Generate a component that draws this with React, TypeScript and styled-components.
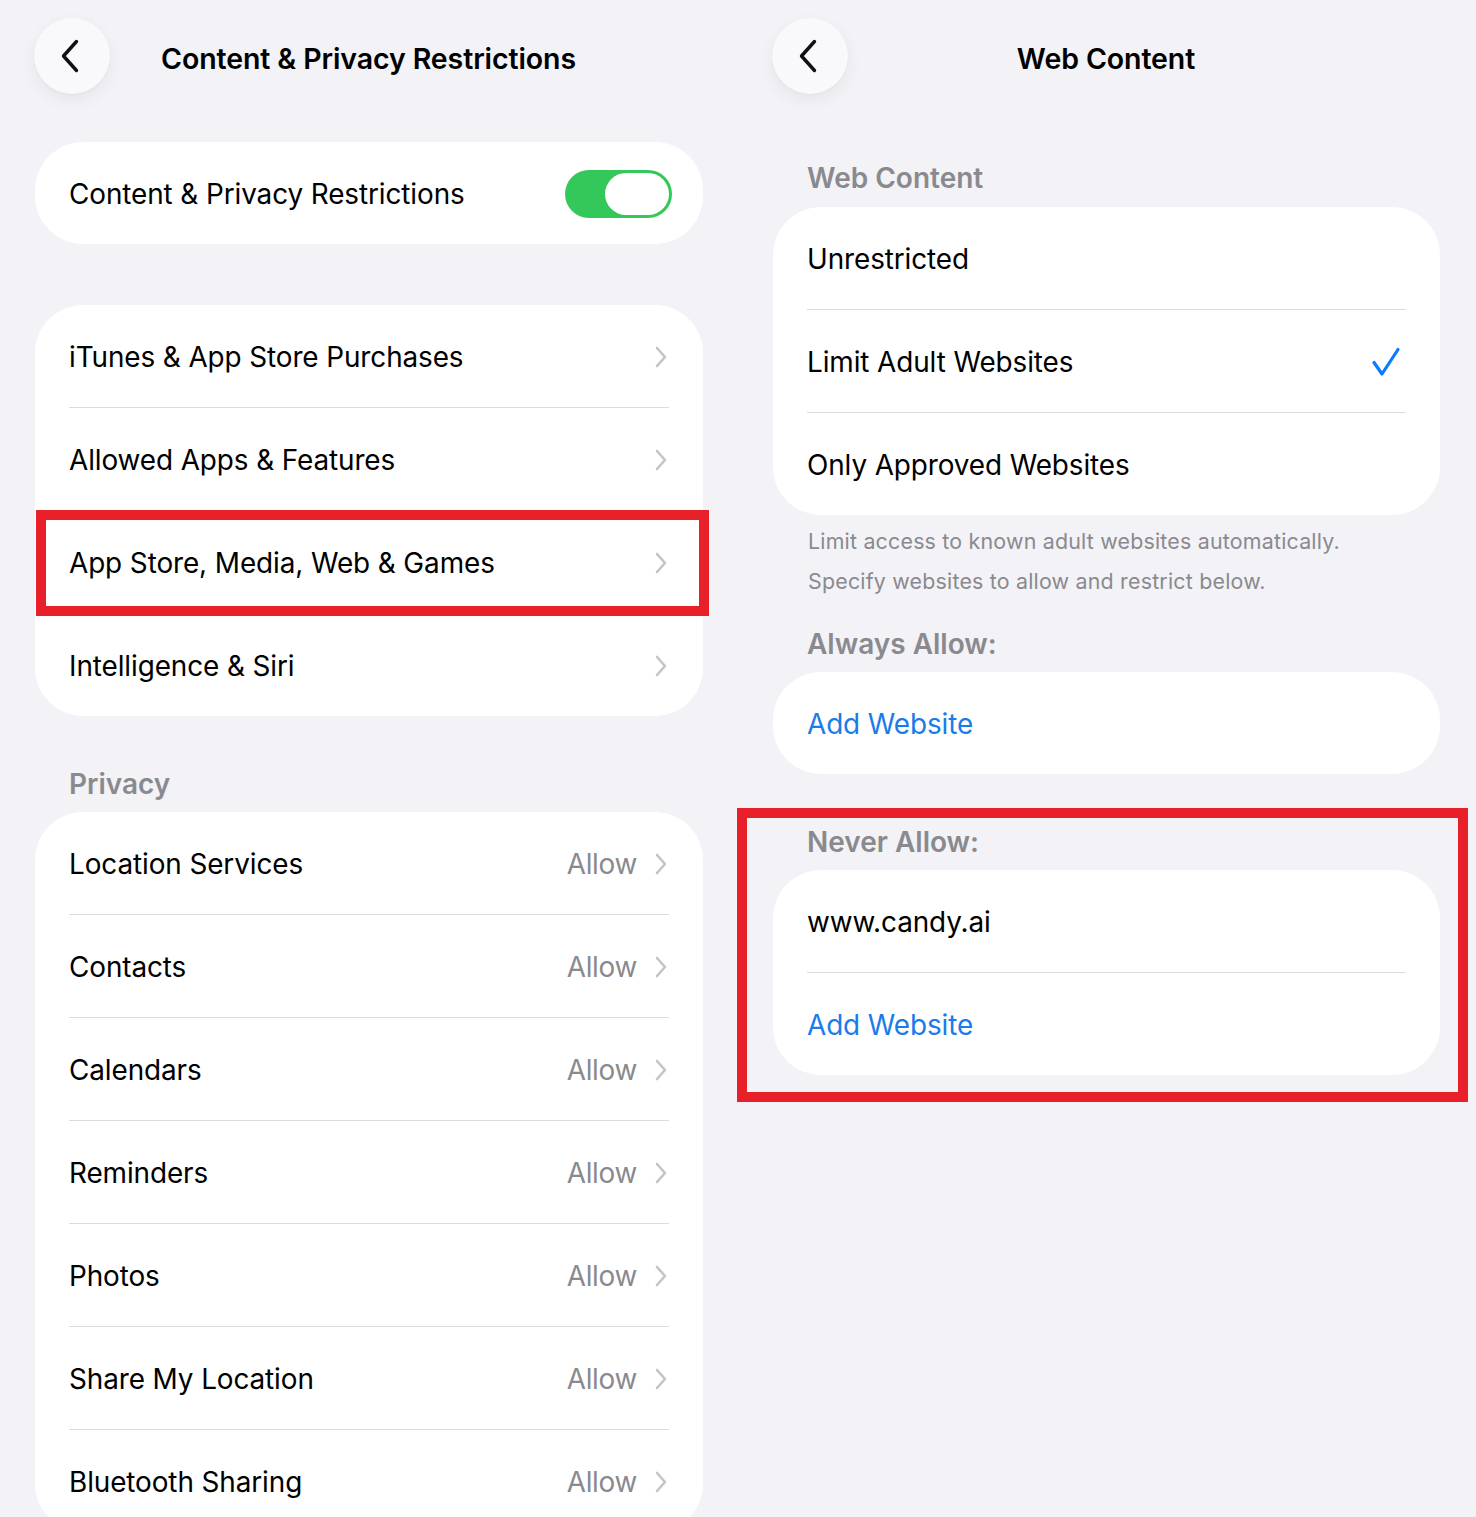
import React from "react";
import styled, { createGlobalStyle } from "styled-components";

const Global = createGlobalStyle`
  html, body {
    margin: 0;
    padding: 0;
    background: #f2f2f7;
  }
  body {
    font-family: Inter, "Liberation Sans", sans-serif;
    overflow: hidden;
    -webkit-font-smoothing: antialiased;
  }
`;

const Page = styled.div`
  display: grid;
  grid-template-columns: 668px 667px;
  column-gap: 70px;
  align-items: start;
  padding: 18px 36px 0 35px;
  height: 1517px;
  box-sizing: border-box;
  overflow: hidden;
  background: #f2f2f7;
`;

const Column = styled.div`
  display: flex;
  flex-direction: column;
  min-width: 0;
`;

const NavBar = styled.div`
  display: grid;
  grid-template-columns: 76px 1fr 76px;
  align-items: center;
  height: 76px;
  margin-left: -1px;
`;

const BackButton = styled.button`
  width: 76px;
  height: 76px;
  border-radius: 50%;
  border: none;
  padding: 0 4px 0 0;
  background: #f9f9fb;
  box-shadow: 0 6px 18px rgba(0, 0, 0, 0.06), 0 1px 3px rgba(0, 0, 0, 0.03);
  display: flex;
  align-items: center;
  justify-content: center;
`;

const NavTitle = styled.h1`
  margin: 0;
  text-align: center;
  font-size: 28.5px;
  font-weight: 600;
  color: #000;
  letter-spacing: -0.1px;
  padding-top: 4px;
  white-space: nowrap;
`;

const Card = styled.div<{ $mt?: number }>`
  background: #fff;
  border-radius: 48px;
  margin-top: ${(p) => p.$mt ?? 0}px;
  display: flex;
  flex-direction: column;
`;

const Row = styled.div`
  position: relative;
  display: flex;
  align-items: center;
  justify-content: space-between;
  height: 102px;
  box-sizing: border-box;
  padding: 2px 36px 0 34px;
  font-size: 27.9px;
  color: #000;
  letter-spacing: -0.1px;
`;

const Label = styled.span<{ $link?: boolean }>`
  color: ${(p) => (p.$link ? "#1a7bea" : "#000")};
`;

const Trailing = styled.div`
  display: flex;
  align-items: center;
  gap: 18px;
`;

const Value = styled.span`
  color: #8a8a8e;
  letter-spacing: -0.3px;
`;

const Separator = styled.div`
  height: 1px;
  background: #dcdce0;
  margin: 0 34px;
`;

const SectionHeader = styled.div<{ $mt: number; $mb?: number }>`
  margin-top: ${(p) => p.$mt}px;
  margin-bottom: ${(p) => p.$mb ?? 10}px;
  height: 36px;
  line-height: 36px;
  padding-left: 34px;
  font-size: 28px;
  font-weight: 600;
  color: #8a8a8e;
`;

const Footer = styled.p`
  margin: 6px 0 0;
  padding-left: 35px;
  font-size: 21.4px;
  line-height: 40px;
  color: #8a8a8e;
  letter-spacing: 0.2px;
`;

const Toggle = styled.div<{ $on: boolean }>`
  width: 107px;
  height: 48px;
  border-radius: 24px;
  background: ${(p) => (p.$on ? "#34c759" : "#e9e9ea")};
  display: flex;
  align-items: center;
  justify-content: ${(p) => (p.$on ? "flex-end" : "flex-start")};
  padding: 0 3px;
  box-sizing: border-box;
  margin-right: -5px;
`;

const Knob = styled.div`
  width: 64px;
  height: 42px;
  border-radius: 21px;
  background: #fff;
`;

const Highlight = styled.div`
  position: absolute;
  border: 10px solid #e8202a;
  pointer-events: none;
`;

const RowHighlight = styled(Highlight)`
  top: -1px;
  bottom: -3px;
  left: 1px;
  right: -6px;
`;

const Group = styled.section<{ $mt: number }>`
  position: relative;
  margin-top: ${(p) => p.$mt}px;
  display: flex;
  flex-direction: column;
`;

const GroupHighlight = styled(Highlight)`
  top: -16px;
  bottom: -27px;
  left: -36px;
  right: -28px;
`;

const CheckWrap = styled.span`
  display: flex;
  margin-right: 3px;
`;

const BackIcon = () => (
  <svg width="20" height="34" viewBox="0 0 20 34">
    <path
      d="M16.5 2.5 L3.5 17 L16.5 31.5"
      fill="none"
      stroke="#111"
      strokeWidth="3.4"
      strokeLinecap="round"
      strokeLinejoin="round"
    />
  </svg>
);

const Chevron = () => (
  <svg width="12" height="22" viewBox="0 0 12 22">
    <path
      d="M2 2 L10 11 L2 20"
      fill="none"
      stroke="#c4c4c8"
      strokeWidth="2.6"
      strokeLinecap="round"
      strokeLinejoin="round"
    />
  </svg>
);

const Check = () => (
  <CheckWrap>
    <svg width="30" height="30" viewBox="0 0 30 30">
      <path
        d="M3 15.5 L11 27 L27 2.5"
        fill="none"
        stroke="#0a7aff"
        strokeWidth="3.2"
        strokeLinecap="round"
        strokeLinejoin="round"
      />
    </svg>
  </CheckWrap>
);

const NavHeader = ({ title }: { title: string }) => (
  <NavBar>
    <BackButton aria-label="Back">
      <BackIcon />
    </BackButton>
    <NavTitle>{title}</NavTitle>
    <span />
  </NavBar>
);

const mainItems = [
  "iTunes & App Store Purchases",
  "Allowed Apps & Features",
  "App Store, Media, Web & Games",
  "Intelligence & Siri",
];

const privacyItems = [
  "Location Services",
  "Contacts",
  "Calendars",
  "Reminders",
  "Photos",
  "Share My Location",
  "Bluetooth Sharing",
];

export default function App() {
  return (
    <>
      <Global />
      <Page>
        <Column>
          <NavHeader title="Content & Privacy Restrictions" />
          <Card $mt={48}>
            <Row>
              <Label>Content &amp; Privacy Restrictions</Label>
              <Toggle $on>
                <Knob />
              </Toggle>
            </Row>
          </Card>

          <Card $mt={61}>
            {mainItems.map((item, i) => (
              <React.Fragment key={item}>
                {i > 0 && <Separator />}
                <Row>
                  <Label>{item}</Label>
                  <Chevron />
                  {i === 2 && <RowHighlight />}
                </Row>
              </React.Fragment>
            ))}
          </Card>

          <SectionHeader $mt={50}>Privacy</SectionHeader>
          <Card>
            {privacyItems.map((item, i) => (
              <React.Fragment key={item}>
                {i > 0 && <Separator />}
                <Row>
                  <Label>{item}</Label>
                  <Trailing>
                    <Value>Allow</Value>
                    <Chevron />
                  </Trailing>
                </Row>
              </React.Fragment>
            ))}
          </Card>
        </Column>

        <Column>
          <NavHeader title="Web Content" />
          <SectionHeader $mt={66} $mb={11}>
            Web Content
          </SectionHeader>
          <Card>
            <Row>
              <Label>Unrestricted</Label>
            </Row>
            <Separator />
            <Row>
              <Label>Limit Adult Websites</Label>
              <Check />
            </Row>
            <Separator />
            <Row>
              <Label>Only Approved Websites</Label>
            </Row>
          </Card>
          <Footer>
            Limit access to known adult websites automatically.
            <br />
            Specify websites to allow and restrict below.
          </Footer>

          <SectionHeader $mt={25}>Always Allow:</SectionHeader>
          <Card>
            <Row>
              <Label $link>Add Website</Label>
            </Row>
          </Card>

          <Group $mt={50}>
            <SectionHeader $mt={0}>Never Allow:</SectionHeader>
            <Card>
              <Row>
                <Label>www.candy.ai</Label>
              </Row>
              <Separator />
              <Row>
                <Label $link>Add Website</Label>
              </Row>
            </Card>
            <GroupHighlight />
          </Group>
        </Column>
      </Page>
    </>
  );
}
